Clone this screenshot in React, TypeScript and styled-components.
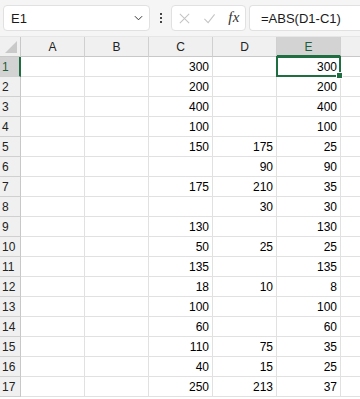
import React from "react";
import styled, { createGlobalStyle, css } from "styled-components";

const GlobalStyle = createGlobalStyle`
  html, body {
    margin: 0;
    padding: 0;
    background: #ffffff;
    overflow: hidden;
  }
  body {
    font-family: "Liberation Sans", Arial, sans-serif;
  }
`;

const COLUMNS = ["A", "B", "C", "D", "E"];
const SELECTED_COL = "E";
const SELECTED_ROW = 1;

// values for columns C, D, E
const DATA: Array<[string, string, string]> = [
  ["300", "", "300"],
  ["200", "", "200"],
  ["400", "", "400"],
  ["100", "", "100"],
  ["150", "175", "25"],
  ["", "90", "90"],
  ["175", "210", "35"],
  ["", "30", "30"],
  ["130", "", "130"],
  ["50", "25", "25"],
  ["135", "", "135"],
  ["18", "10", "8"],
  ["100", "", "100"],
  ["60", "", "60"],
  ["110", "75", "35"],
  ["40", "15", "25"],
  ["250", "213", "37"],
];

const App = () => {
  return (
    <>
      <GlobalStyle />
      <Page>
        <Toolbar>
          <NameBox>
            <NameText>E1</NameText>
            <Chevron viewBox="0 0 10 6">
              <path d="M1 1l4 4 4-4" fill="none" stroke="#333" strokeWidth="1.1" />
            </Chevron>
          </NameBox>
          <Dots>
            <span />
            <span />
            <span />
          </Dots>
          <Controls>
            <ControlIcon viewBox="0 0 14 14">
              <path d="M2 2l10 10M12 2L2 12" stroke="#c4c4c4" strokeWidth="1.1" fill="none" />
            </ControlIcon>
            <ControlIcon viewBox="0 0 14 14">
              <path d="M1.5 7.5l4 4 7-9" stroke="#c4c4c4" strokeWidth="1.1" fill="none" />
            </ControlIcon>
            <Fx>fx</Fx>
          </Controls>
          <FormulaBox>=ABS(D1-C1)</FormulaBox>
        </Toolbar>

        <Sheet>
          <Corner>
            <CornerTriangle />
          </Corner>
          {COLUMNS.map((c) => (
            <ColHeader key={c} $selected={c === SELECTED_COL}>
              {c}
            </ColHeader>
          ))}
          <ColHeader $selected={false} />

          {DATA.map((row, i) => {
            const n = i + 1;
            return (
              <React.Fragment key={n}>
                <RowHeader $selected={n === SELECTED_ROW}>{n}</RowHeader>
                <Cell />
                <Cell />
                <Cell>{row[0]}</Cell>
                <Cell>{row[1]}</Cell>
                <Cell $active={n === SELECTED_ROW}>
                  {row[2]}
                  {n === SELECTED_ROW && <FillHandle />}
                </Cell>
                <Cell />
              </React.Fragment>
            );
          })}
        </Sheet>
      </Page>
    </>
  );
};

export default App;

const Page = styled.div`
  width: 360px;
  height: 399px;
  overflow: hidden;
  background: #ffffff;
`;

const Toolbar = styled.div`
  height: 37px;
  display: flex;
  align-items: flex-start;
  padding: 5px 0 0 3px;
  box-sizing: border-box;
  background: #f5f5f5;
  border-bottom: 1px solid #e6e6e6;
`;

const boxBase = css`
  height: 26px;
  box-sizing: border-box;
  background: #ffffff;
  border: 1px solid #e1e1e1;
  border-radius: 4px;
  display: flex;
  align-items: center;
`;

const NameBox = styled.div`
  ${boxBase};
  width: 147px;
  padding: 0 6px 0 7px;
  justify-content: space-between;
`;

const NameText = styled.span`
  font-size: 13px;
  color: #1a1a1a;
`;

const Chevron = styled.svg`
  width: 9px;
  height: 6px;
`;

const Dots = styled.div`
  width: 21px;
  height: 26px;
  display: flex;
  flex-direction: column;
  align-items: center;
  justify-content: center;
  gap: 2px;

  span {
    width: 2px;
    height: 2px;
    background: #444;
  }
`;

const Controls = styled.div`
  ${boxBase};
  width: 75px;
  padding: 0 5px 0 6px;
  justify-content: space-between;
`;

const ControlIcon = styled.svg`
  width: 13px;
  height: 13px;
`;

const Fx = styled.span`
  font-family: "Liberation Serif", "Times New Roman", serif;
  font-style: italic;
  font-size: 15px;
  color: #333;
  letter-spacing: 0.5px;
  margin-top: -2px;
`;

const FormulaBox = styled.div`
  ${boxBase};
  flex: 1;
  margin-left: 3px;
  padding-left: 11px;
  font-size: 13px;
  color: #1a1a1a;
  border-right: none;
  border-radius: 4px 0 0 4px;
`;

const Sheet = styled.div`
  display: grid;
  grid-template-columns: 21px repeat(5, 64px) 64px;
  grid-auto-rows: 20px;
  font-size: 12px;
  color: #000;
`;

const Corner = styled.div`
  box-sizing: border-box;
  background: #f0f0f0;
  border-right: 1px solid #c8c8c8;
  border-bottom: 1px solid #c8c8c8;
  position: relative;
`;

const CornerTriangle = styled.div`
  position: absolute;
  right: 3px;
  bottom: 3px;
  width: 0;
  height: 0;
  border-left: 12px solid transparent;
  border-bottom: 12px solid #c9c9c9;
`;

const ColHeader = styled.div<{ $selected: boolean }>`
  box-sizing: border-box;
  display: flex;
  align-items: center;
  justify-content: center;
  background: ${(p) => (p.$selected ? "#d3d3d3" : "#f0f0f0")};
  color: ${(p) => (p.$selected ? "#1e5e3a" : "#222")};
  border-right: 1px solid #d0d0d0;
  border-bottom: ${(p) => (p.$selected ? "2px solid #1e6e42" : "1px solid #c8c8c8")};
  padding-top: ${(p) => (p.$selected ? "1px" : "0")};
`;

const RowHeader = styled.div<{ $selected: boolean }>`
  box-sizing: border-box;
  display: flex;
  align-items: center;
  padding-left: 2px;
  background: ${(p) => (p.$selected ? "#d3d3d3" : "#f0f0f0")};
  color: ${(p) => (p.$selected ? "#1e5e3a" : "#222")};
  border-right: ${(p) => (p.$selected ? "2px solid #1e6e42" : "1px solid #c8c8c8")};
  border-bottom: 1px solid #d0d0d0;
  font-size: 12px;
`;

const Cell = styled.div<{ $active?: boolean }>`
  box-sizing: border-box;
  position: relative;
  display: flex;
  align-items: center;
  justify-content: flex-end;
  padding-right: 3px;
  border-right: 1px solid #e1e1e1;
  border-bottom: 1px solid #e1e1e1;

  ${(p) =>
    p.$active &&
    css`
      &::after {
        content: "";
        position: absolute;
        left: -1px;
        top: -1px;
        right: -1px;
        bottom: -1px;
        border: 2px solid #1e6e42;
        pointer-events: none;
      }
    `}
`;

const FillHandle = styled.span`
  position: absolute;
  right: -3px;
  bottom: -3px;
  width: 5px;
  height: 5px;
  background: #1e6e42;
  border: 1px solid #ffffff;
  z-index: 2;
`;
